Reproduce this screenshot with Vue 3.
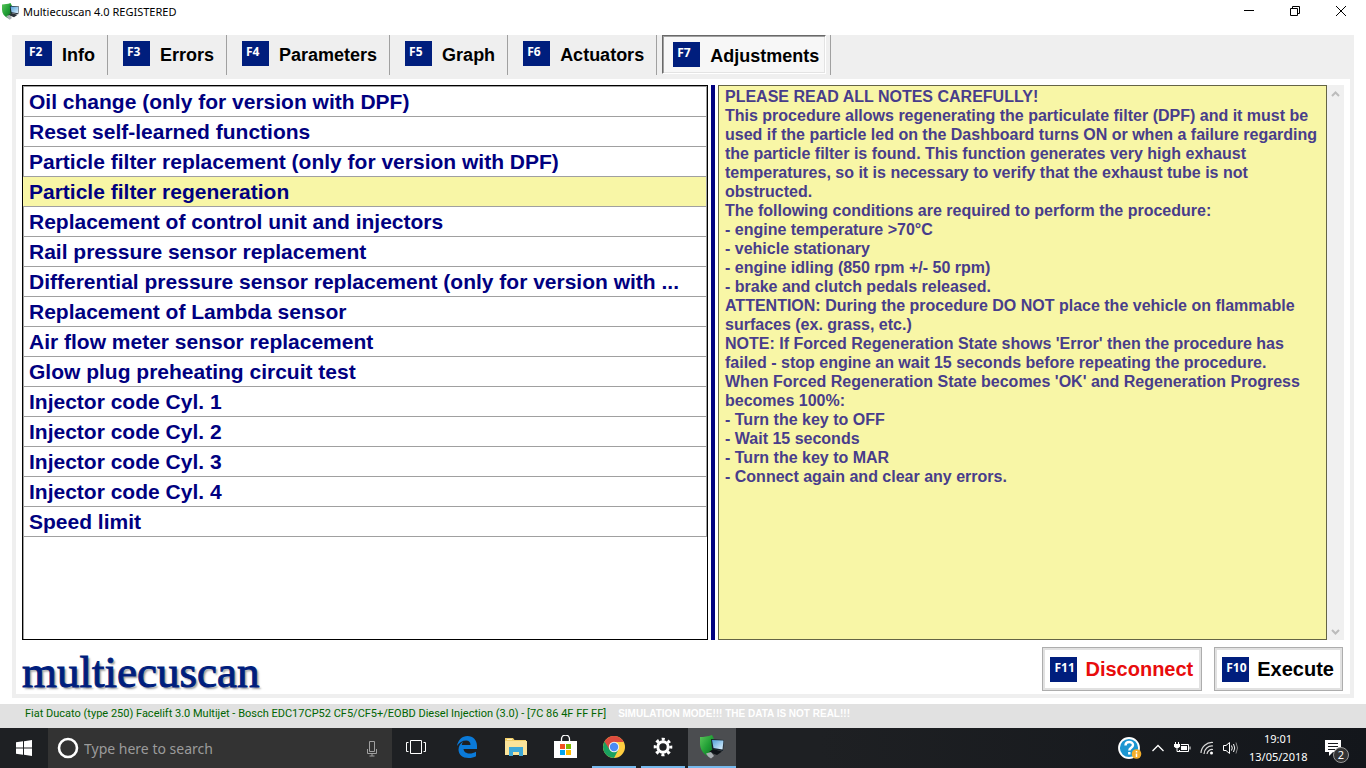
<script setup>
import { ref } from 'vue'

const tabs = [
  { key: 'F2', label: 'Info' },
  { key: 'F3', label: 'Errors' },
  { key: 'F4', label: 'Parameters' },
  { key: 'F5', label: 'Graph' },
  { key: 'F6', label: 'Actuators' },
  { key: 'F7', label: 'Adjustments' },
]
const activeTab = ref('F7')

const procedures = [
  'Oil change (only for version with DPF)',
  'Reset self-learned functions',
  'Particle filter replacement (only for version with DPF)',
  'Particle filter regeneration',
  'Replacement of control unit and injectors',
  'Rail pressure sensor replacement',
  'Differential pressure sensor replacement (only for version with ...',
  'Replacement of Lambda sensor',
  'Air flow meter sensor replacement',
  'Glow plug preheating circuit test',
  'Injector code Cyl. 1',
  'Injector code Cyl. 2',
  'Injector code Cyl. 3',
  'Injector code Cyl. 4',
  'Speed limit',
]
const selected = ref(3)

const notes = `PLEASE READ ALL NOTES CAREFULLY!
This procedure allows regenerating the particulate filter (DPF) and it must be
used if the particle led on the Dashboard turns ON or when a failure regarding
the particle filter is found. This function generates very high exhaust
temperatures, so it is necessary to verify that the exhaust tube is not
obstructed.
The following conditions are required to perform the procedure:
- engine temperature >70°C
- vehicle stationary
- engine idling (850 rpm +/- 50 rpm)
- brake and clutch pedals released.
ATTENTION: During the procedure DO NOT place the vehicle on flammable
surfaces (ex. grass, etc.)
NOTE: If Forced Regeneration State shows 'Error' then the procedure has
failed - stop engine an wait 15 seconds before repeating the procedure.
When Forced Regeneration State becomes 'OK' and Regeneration Progress
becomes 100%:
- Turn the key to OFF
- Wait 15 seconds
- Turn the key to MAR
- Connect again and clear any errors.`
</script>

<template>
  <div class="desktop">
    <header class="titlebar">
      <svg class="app-icon" viewBox="0 0 24 24" aria-hidden="true">
        <defs>
          <linearGradient id="shield" x1="0" y1="0" x2="1" y2="1">
            <stop offset="0" stop-color="#5cc75c" />
            <stop offset="0.5" stop-color="#22a036" />
            <stop offset="1" stop-color="#0b6a20" />
          </linearGradient>
          <linearGradient id="screen" x1="0" y1="0" x2="1" y2="1">
            <stop offset="0" stop-color="#4f9fd8" />
            <stop offset="1" stop-color="#e2f3ff" />
          </linearGradient>
        </defs>
        <path d="M0 2C4 2 8 1.500 12 0l2 4v12l-5 6C3 19 0 14 0 9z" fill="url(#shield)" />
        <path d="M11 4 24 5 23 16 12 14z" fill="#16222c" />
        <path d="M12 5 23.500 5.500l-1 9-9-1.500z" fill="url(#screen)" />
        <path d="M9 17l4-3 9 2.500-5 3.500z" fill="#2b3238" />
        <path d="M6 18.500l5-1.500 3 4-3 2.500c-2-1-4-3-5-5z" fill="#a9afb3" />
      </svg>
      <h1 class="title">Multiecuscan 4.0 REGISTERED</h1>
      <div class="window-controls">
        <button type="button" aria-label="Minimize">
          <svg viewBox="0 0 12 12"><path d="M1 5.500h10" /></svg>
        </button>
        <button type="button" aria-label="Restore">
          <svg viewBox="0 0 12 12"><path d="M1.500 3.500h7v7h-7zM3.500 3.500v-2h7v7h-2" /></svg>
        </button>
        <button type="button" aria-label="Close">
          <svg viewBox="0 0 12 12"><path d="M1 1l10 10M11 1L1 11" /></svg>
        </button>
      </div>
    </header>

    <main class="frame">
      <nav class="toolbar">
        <div v-for="t in tabs" :key="t.key" class="tab-cell">
          <button
            type="button"
            class="tab"
            :class="{ active: t.key === activeTab }"
            @click="activeTab = t.key"
          >
            <span class="fkey">{{ t.key }}</span>
            <span class="tab-label">{{ t.label }}</span>
          </button>
        </div>
      </nav>

      <section class="content">
        <div class="panes">
          <ul class="procedures">
            <li v-for="(p, i) in procedures" :key="p">
              <button type="button" :class="{ selected: i === selected }" @click="selected = i">{{ p }}</button>
            </li>
          </ul>
          <div class="splitter"></div>
          <div class="notes">
            <p class="notes-text">{{ notes }}</p>
            <div class="scrollbar">
              <button type="button" aria-label="Scroll up">
                <svg viewBox="0 0 9 6"><path d="M1 5l3.500-3.500L8 5" /></svg>
              </button>
              <button type="button" aria-label="Scroll down">
                <svg viewBox="0 0 9 6"><path d="M1 1l3.500 3.500L8 1" /></svg>
              </button>
            </div>
          </div>
        </div>
        <div class="actions">
          <div class="logo">multiecuscan</div>
          <button type="button" class="action danger"><span class="fkey">F11</span>Disconnect</button>
          <button type="button" class="action"><span class="fkey">F10</span>Execute</button>
        </div>
      </section>
    </main>

    <div class="status">
      <span class="vehicle">Fiat Ducato (type 250) Facelift 3.0 Multijet - Bosch EDC17CP52 CF5/CF5+/EOBD Diesel Injection (3.0) - [7C 86 4F FF FF]</span>
      <span class="simulation">SIMULATION MODE!!! THE DATA IS NOT REAL!!!</span>
    </div>

    <footer class="taskbar">
      <button type="button" class="start" aria-label="Start">
        <svg viewBox="0 0 16 16" width="16" height="16">
          <path d="M0 2.300 7 1.300V7.500H0zM8 1.200 16 0v7.500H8zM0 8.500h7v6.200l-7-1zM8 8.500h8V16l-8-1.200z" fill="#fff" />
        </svg>
      </button>
      <label class="search">
        <svg viewBox="0 0 22 22" width="22" height="22" aria-hidden="true">
          <circle cx="11" cy="11" r="9" fill="none" stroke="#fff" stroke-width="2.600" />
        </svg>
        <input type="text" placeholder="Type here to search" aria-label="Search" />
        <svg viewBox="0 0 12 17" width="12" height="17" aria-hidden="true">
          <path d="M3.500 1.500h5v10h-5zM1.500 9v4.500h9V9M6 13.500V16M3.500 16h5" fill="none" stroke="#a0a0a0" />
        </svg>
      </label>
      <button type="button" class="task view" aria-label="Task view">
        <svg viewBox="0 0 22 16" width="22" height="16">
          <path d="M5.500 1.500h11v13h-11zM3.500 3.500h-2v9h2M18.500 3.500h2v9h-2" fill="none" stroke="#fff" />
        </svg>
      </button>
      <button type="button" class="task" aria-label="Edge">
        <svg viewBox="0 0 22 24" width="22" height="24">
          <path d="M1 11C2 5 6 1 11.500 1 17 1 21 5 21 11v3H7.500c.3 3 3 4.500 6 4.500 2.500 0 4.500-.6 6.500-1.800v4.500c-2 1.200-4.500 1.800-7.500 1.800C6.500 23 2.500 19.500 2.500 14.500c0-3.500 2-6.500 5-8-1 .9-1.500 2.200-1.700 3.500h8.700c0-3-1.500-4.500-4.300-4.500C6.500 5.500 3 7.500 1 11z" fill="#0a7ad9" />
        </svg>
      </button>
      <button type="button" class="task" aria-label="File Explorer">
        <svg viewBox="0 0 22 20" width="22" height="20">
          <path d="M0 1h8l1.500 2H21v15H0z" fill="#f2cf69" />
          <path d="M0 4h22v14H0z" fill="#fbe49a" />
          <path d="M2 2.500h5" stroke="#fff3c4" />
          <path d="M4 10h14v9h-4v-4H8v4H4z" fill="#3ea9d8" />
        </svg>
      </button>
      <button type="button" class="task" aria-label="Store">
        <svg viewBox="0 0 23 24" width="23" height="24">
          <path d="M7.500 7V4a3 3 0 0 1 8 0v3" fill="none" stroke="#fff" stroke-width="1.300" />
          <path d="M0 6h23v17H0z" fill="#fff" />
          <path d="M6 9h5v5H6z" fill="#f25022" />
          <path d="M12 9h5v5h-5z" fill="#7fba00" />
          <path d="M6 15h5v5H6z" fill="#00a4ef" />
          <path d="M12 15h5v5h-5z" fill="#ffb900" />
        </svg>
      </button>
      <button type="button" class="task running" aria-label="Chrome">
        <svg viewBox="0 0 22 22" width="22" height="22">
          <circle cx="11" cy="11" r="11" fill="#ffcd40" />
          <path d="M1.500 5.500A11 11 0 0 0 11 22L15.500 13.500 11 11z" fill="#1aa15f" />
          <path d="M11 6h9.700L20.500 5.500A11 11 0 0 0 1.500 5.500L6.600 13.500z" fill="#dd4b3e" />
          <circle cx="11" cy="11" r="5.200" fill="#f1f1f1" />
          <circle cx="11" cy="11" r="4.200" fill="#4a8af4" />
        </svg>
      </button>
      <button type="button" class="task running" aria-label="Settings">
        <svg viewBox="0 0 20 20" width="20" height="20">
          <circle cx="10" cy="10" r="5.200" fill="none" stroke="#fff" stroke-width="3" />
          <circle cx="10" cy="10" r="7.800" fill="none" stroke="#fff" stroke-width="3" stroke-dasharray="3.060 3.066" stroke-dashoffset="1.530" />
        </svg>
      </button>
      <button type="button" class="task running current" aria-label="Multiecuscan">
        <svg viewBox="0 0 24 24" width="24" height="24">
          <path d="M0 2C4 2 8 1.500 12 0l2 4v12l-5 6C3 19 0 14 0 9z" fill="url(#shield)" />
          <path d="M11 4 24 5 23 16 12 14z" fill="#16222c" />
          <path d="M12 5 23.500 5.500l-1 9-9-1.500z" fill="url(#screen)" />
          <path d="M9 17l4-3 9 2.500-5 3.500z" fill="#0f1418" />
          <path d="M6 18.500l5-1.500 3 4-3 2.500c-2-1-4-3-5-5z" fill="#a9afb3" />
        </svg>
      </button>

      <div class="tray">
        <svg viewBox="0 0 24 24" width="24" height="24" aria-hidden="true">
          <circle cx="11" cy="12" r="10" fill="#1b96d1" stroke="#fff" stroke-width="1.800" />
          <path d="M7.500 9.500c0-4.500 7.500-4.500 7.500-.5 0 2.700-3.700 2.700-3.700 5.500M11.300 16v2.500" fill="none" stroke="#fff" stroke-width="2.400" />
          <circle cx="18.500" cy="18" r="4.800" fill="#f3ae2b" />
          <path d="M18.500 15v1.500M18.500 17.500v3.500" stroke="#fff" stroke-width="1.500" />
        </svg>
        <svg viewBox="0 0 14 8" width="14" height="8" aria-hidden="true">
          <path d="M1.500 7 7 1.500 12.500 7" fill="none" stroke="#fff" stroke-width="1.300" />
        </svg>
        <svg viewBox="0 0 17 12" width="17" height="12" aria-hidden="true">
          <path d="M7 2.500h7.500v7h-9V8M16 4.500v3M1.500 0v2M4.500 0v2M3 6v3.500h3" fill="none" stroke="#fff" />
          <path d="M0 2h6v2.500L4.500 6h-3L0 4.500z" fill="#fff" />
          <path d="M7 4h6v4H7z" fill="#fff" />
        </svg>
        <svg viewBox="0 0 14 14" width="14" height="14" aria-hidden="true">
          <path d="M1 12A11 11 0 0 1 13 1.500M4 13A8 8 0 0 1 13 5M7 13A5 5 0 0 1 13 8.500" fill="none" stroke="#d8d8d8" stroke-width="1.200" />
          <circle cx="11.500" cy="12" r="1.500" fill="#fff" />
        </svg>
        <svg viewBox="0 0 16 14" width="16" height="14" aria-hidden="true">
          <path d="M.5 4.500h2.500L6.500 1.500v11L3 9.500H.5z" fill="none" stroke="#fff" />
          <path d="M8.500 4.500q1.500 2.500 0 5M10.500 3q2.500 4 0 8" fill="none" stroke="#fff" />
          <path d="M13 1.500q3 5.500 0 11" fill="none" stroke="#888" />
        </svg>
      </div>
      <time class="clock"><span>19:01</span><span>13/05/2018</span></time>
      <button type="button" class="notify" aria-label="Notifications">
        <svg viewBox="0 0 18 18" width="18" height="18">
          <path d="M1 1h16v12H9l-4 4v-4H1z" fill="#fff" />
          <path d="M4 4.500h10M4 7.500h10M4 10.500h7" stroke="#17191d" />
        </svg>
        <span class="badge">2</span>
      </button>
    </footer>
  </div>
</template>

<style>
body {
  background: #fff;
}
</style>

<style scoped>
.desktop {
  display: flex;
  flex-direction: column;
  min-height: 100vh;
  font-family: "Liberation Sans", Arial, sans-serif;
}
button {
  margin: 0;
  padding: 0;
  border: 0;
  background: none;
  color: inherit;
  font: inherit;
}
svg {
  display: block;
  flex: none;
}
.titlebar {
  display: flex;
  align-items: flex-start;
  height: 35px;
}
.app-icon {
  width: 17px;
  height: 17px;
  margin: 3px 4px 0 2px;
}
.title {
  margin: 3px 0 0;
  font: 400 11px/18px "Noto Sans", sans-serif;
  color: #000;
}
.window-controls {
  display: flex;
  margin-left: auto;
  padding-right: 2px;
}
.window-controls button {
  display: grid;
  place-items: center;
  width: 46px;
  height: 21px;
}
.window-controls svg {
  width: 12px;
  height: 12px;
  fill: none;
  stroke: #000;
}
.frame {
  display: flex;
  flex: 1;
  flex-direction: column;
  margin: 0 12px 6px;
  padding: 0 4px 4px;
  background: #efefef;
}
.toolbar {
  display: flex;
  height: 44px;
  margin-left: -4px;
}
.tab-cell {
  height: 40px;
  padding: 0 4px 0 5px;
  border-right: 1px solid #a0a0a0;
}
.tab-cell:first-child {
  padding-left: 3px;
}
.tab {
  display: flex;
  align-items: center;
  gap: 10px;
  height: 39px;
  padding: 0 7px 2px 10px;
  font-size: 18px;
  font-weight: 700;
  color: #000;
}
.tab-label {
  padding: 3px 1px 0 0;
}
.tab.active {
  padding: 0 5px 0 10px;
  border: 1px solid;
  border-color: #696969 #fff #fff #696969;
  box-shadow: inset 1px 1px #a0a0a0, inset -1px -1px #e3e3e3;
  background: #f7f7f7;
}
.fkey {
  flex: none;
  box-sizing: border-box;
  width: 27px;
  height: 25px;
  padding-left: 4px;
  background: #001e7d;
  color: #fff;
  font: 700 12px/21px "Open Sans", sans-serif;
  text-align: left;
}
.content {
  display: flex;
  flex: 1;
  flex-direction: column;
  padding: 6px 6px 3px;
  background: #fff;
}
.panes {
  display: grid;
  flex: 1;
  grid-template-columns: minmax(0, 686fr) 4px minmax(0, 626fr);
  gap: 3px;
}
.procedures {
  margin: 0;
  padding: 0;
  border: 1px solid #000;
  list-style: none;
  box-shadow: inset 1px 1px #a0a0a0;
}
.procedures button {
  display: block;
  width: 100%;
  height: 30px;
  padding: 0 0 0 6px;
  overflow: hidden;
  border: 1px solid #a0a0a0;
  border-width: 0 1px 1px 0;
  font-size: 21px;
  line-height: 27px;
  font-weight: 700;
  text-align: left;
  white-space: nowrap;
  color: #000080;
}
.procedures li:first-child {
  padding-top: 1px;
}
.procedures button.selected {
  background: #f8f6a6;
}
.splitter {
  background: #000080;
}
.notes {
  display: flex;
}
.notes-text {
  flex: 1;
  min-width: 0;
  margin: 0;
  padding: 1px 6px;
  border: 1px solid #646446;
  background: #f8f6a6;
  color: #483d8b;
  font-size: 16px;
  line-height: 19px;
  font-weight: 700;
  white-space: pre-wrap;
}
.scrollbar {
  display: flex;
  flex-direction: column;
  justify-content: space-between;
  width: 17px;
  background: #f0f0f0;
}
.scrollbar button {
  display: grid;
  place-items: center;
  height: 17px;
}
.scrollbar svg {
  width: 9px;
  height: 6px;
  fill: none;
  stroke: #bcbcbc;
  stroke-width: 2;
}
.actions {
  display: flex;
  align-items: center;
  gap: 12px;
  margin: 7px 1px 0 0;
  height: 44px;
}
.logo {
  margin-right: auto;
  padding-top: 6px;
  font-family: "Liberation Serif", serif;
  font-size: 45px;
  line-height: 44px;
  color: #001e7d;
  -webkit-text-stroke: 1px #001e7d;
  text-shadow: 2px 2px 2px #999;
}
.action {
  display: flex;
  align-items: center;
  gap: 8px;
  height: 44px;
  padding: 0 8px 0 7px;
  border: 1px solid #adadad;
  box-shadow: inset 0 0 0 2px #e1e1e1;
  font-size: 20px;
  font-weight: 700;
  color: #000;
}
.danger {
  color: #e80c0c;
}
.status {
  display: flex;
  gap: 12px;
  height: 24px;
  padding-left: 25px;
  background: #e1e1e1;
  font-size: 11px;
  line-height: 20px;
  white-space: nowrap;
}
.vehicle {
  font-family: Roboto, "Liberation Sans", sans-serif;
  color: #006400;
}
.simulation {
  font-size: 10px;
  font-weight: 700;
  color: #fff;
}
.taskbar {
  display: flex;
  height: 40px;
  background: linear-gradient(90deg, #1e2023, #1e2023 60%, #13161b);
  color: #fff;
  font-family: "Noto Sans", sans-serif;
}
.start,
.task {
  display: grid;
  place-items: center;
  width: 48px;
}
.task {
  margin-right: 1px;
  border-bottom: 2px solid transparent;
}
.view {
  margin-right: 3px;
}
.running {
  border-image: linear-gradient(90deg, transparent 4px, #76b9ed 4px, #76b9ed 44px, transparent 44px) 2;
}
.current {
  background: #4b4d50;
  border-image: none;
  border-color: #76b9ed;
}
.search {
  display: flex;
  align-items: center;
  box-sizing: border-box;
  width: 344px;
  padding: 0 14px 0 9px;
  background: #333;
}
.search input {
  flex: 1;
  min-width: 0;
  padding: 0 0 0 5px;
  border: 0;
  outline: 0;
  background: none;
  color: #fff;
  font: 14px "Noto Sans", sans-serif;
}
.search input::placeholder {
  color: #9b9b9b;
  opacity: 1;
}
.tray {
  display: flex;
  align-items: center;
  gap: 9px;
  margin-left: auto;
}
.clock {
  display: flex;
  flex-direction: column;
  justify-content: center;
  width: 58px;
  margin-left: 10px;
  font-size: 11px;
  line-height: 18px;
  text-align: center;
}
.notify {
  position: relative;
  display: grid;
  place-items: center;
  width: 52px;
  margin-right: 7px;
}
.badge {
  position: absolute;
  right: 10px;
  bottom: 5px;
  width: 14px;
  height: 14px;
  border: 1px solid #999;
  border-radius: 50%;
  background: #333;
  font-size: 11px;
  line-height: 14px;
}
</style>
